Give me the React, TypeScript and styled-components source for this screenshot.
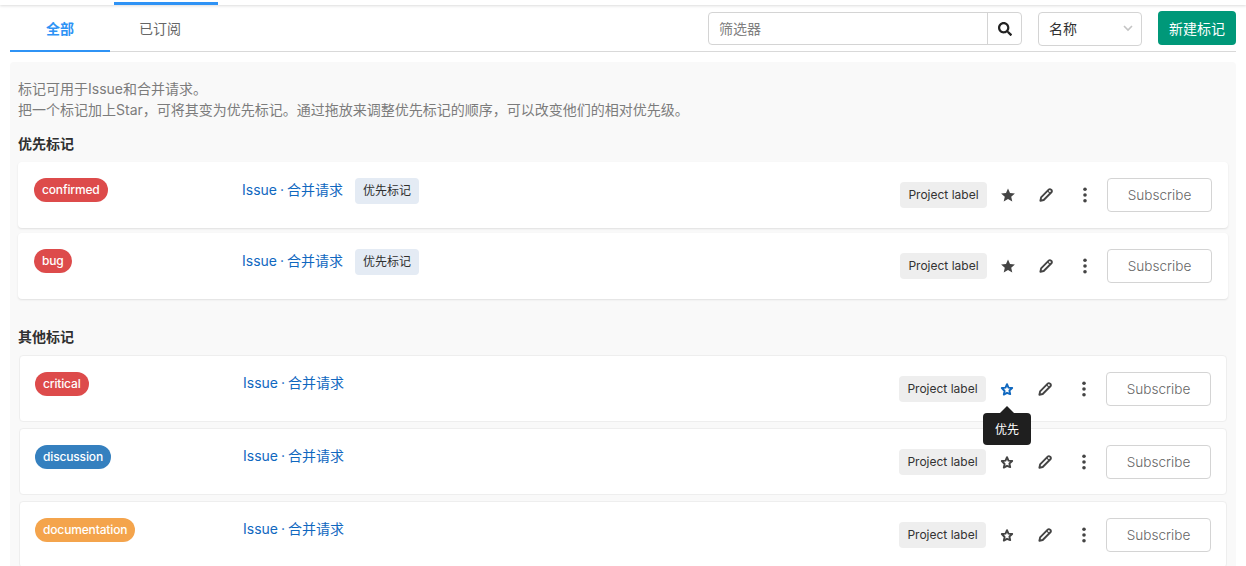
import React from 'react';
import styled, { createGlobalStyle } from 'styled-components';
import { FaSearch } from 'react-icons/fa';

const GlobalStyle = createGlobalStyle`
  html, body {
    margin: 0;
    padding: 0;
    height: 100%;
    overflow: hidden;
    background: #fff;
    font-family: Inter, "Noto Sans CJK SC", sans-serif;
    font-size: 14px;
    color: #303030;
  }
  * { box-sizing: border-box; }
`;

const TopStrip = styled.div`
  height: 5px;
  padding: 2px 0 0 114px;
  background: #fff;
  box-shadow: 0 1px 3px rgba(0, 0, 0, 0.14);
`;

const ActiveBar = styled.div`
  width: 104px;
  height: 3px;
  background: #2f93f5;
`;

const Toolbar = styled.div`
  display: flex;
  align-items: flex-start;
  justify-content: space-between;
  height: 47px;
  margin: 0 10px;
  border-bottom: 1px solid #d9d9d9;
`;

const Tabs = styled.div`
  display: flex;
`;

const Tab = styled.div<{ $active?: boolean }>`
  width: 100px;
  height: 47px;
  padding-top: 14px;
  line-height: 20px;
  text-align: center;
  color: ${(p) => (p.$active ? '#2f93f5' : '#666')};
  font-weight: ${(p) => (p.$active ? 600 : 400)};
  border-bottom: ${(p) => (p.$active ? '2px solid #2f93f5' : 'none')};
`;

const Controls = styled.div`
  display: flex;
  align-items: flex-start;
  padding-top: 6px;
`;

const Search = styled.div`
  display: flex;
  width: 314px;
  height: 33px;
  margin-top: 1px;
  margin-right: 16px;
  border: 1px solid #d4d4d4;
  border-radius: 4px;
`;

const SearchInput = styled.div`
  flex: 1;
  padding-left: 10px;
  line-height: 32px;
  color: #808080;
`;

const SearchButton = styled.div`
  display: flex;
  align-items: center;
  justify-content: center;
  width: 34px;
  border-left: 1px solid #d4d4d4;
  color: #222;
  font-size: 14px;
`;

const SortSelect = styled.div`
  display: flex;
  align-items: center;
  justify-content: space-between;
  width: 104px;
  height: 34px;
  margin-top: 1px;
  margin-right: 16px;
  padding: 0 7px 2px 10px;
  border: 1px solid #d4d4d4;
  border-radius: 4px;
  color: #303030;
`;

const NewButton = styled.button`
  width: 78px;
  height: 34px;
  padding: 0;
  border: none;
  border-radius: 4px;
  background: #009879;
  color: #fff;
  font: inherit;
`;

const Panel = styled.div`
  margin: 10px 10px 0;
  padding: 16px 8px;
  border-radius: 4px;
  background: #f9f9f9;
`;

const Intro = styled.p`
  margin: 0;
  font-size: 14px;
  line-height: 21px;
  color: #7c7c7c;
`;

const Heading = styled.h4<{ $spaced?: boolean }>`
  margin: ${(p) => (p.$spaced ? '28px 0 8px' : '14px 0 8px')};
  font-size: 14px;
  line-height: 20px;
  font-weight: 600;
  color: #303030;
`;

const RowList = styled.div<{ $gap: number }>`
  display: flex;
  flex-direction: column;
  gap: ${(p) => p.$gap}px;
`;

const Row = styled.div<{ $priority?: boolean }>`
  display: flex;
  align-items: flex-start;
  justify-content: space-between;
  height: ${(p) => (p.$priority ? 66 : 67)}px;
  margin: ${(p) => (p.$priority ? '0' : '0 1px')};
  padding: ${(p) => (p.$priority ? '16px' : '16px 15px')};
  border-radius: 4px;
  background: #fff;
  ${(p) =>
    p.$priority
      ? 'box-shadow: 0 1px 2px rgba(0, 0, 0, 0.1);'
      : 'border: 1px solid #eeeeee;'}
`;

const RowMain = styled.div`
  display: flex;
  align-items: flex-start;
`;

const LabelCell = styled.div`
  width: 208px;
`;

const LabelPill = styled.span<{ $color: string }>`
  display: inline-block;
  height: 24px;
  padding: 0 8px;
  border-radius: 12px;
  background: ${(p) => p.$color};
  color: #fff;
  font-size: 12px;
  font-weight: 500;
  letter-spacing: -0.15px;
  line-height: 23px;
`;

const Links = styled.div<{ $priority?: boolean }>`
  margin-top: ${(p) => (p.$priority ? 0 : -1)}px;
  line-height: 24px;
  font-size: 14px;
  word-spacing: -1px;
  color: #1068bf;
`;

const PriorityTag = styled.span`
  height: 26px;
  margin-left: 12px;
  padding: 0 8px;
  border-radius: 4px;
  background: #e4ebf4;
  color: #303030;
  font-size: 12px;
  line-height: 25px;
`;

const RowActions = styled.div`
  display: flex;
  align-items: center;
  height: 34px;
`;

const ScopeTag = styled.span`
  width: 87px;
  height: 26px;
  border-radius: 4px;
  background: #eeeeee;
  color: #333;
  font-size: 12px;
  line-height: 26px;
  text-align: center;
`;

const IconSlot = styled.span<{ $active?: boolean; $width: number }>`
  position: relative;
  display: flex;
  align-items: center;
  justify-content: center;
  width: ${(p) => p.$width}px;
  height: 16px;
  margin-top: -1px;
  color: ${(p) => (p.$active ? '#1068bf' : '#444')};
`;

const Tooltip = styled.span`
  position: absolute;
  top: 32px;
  left: 50%;
  width: 48px;
  height: 32px;
  margin-left: -24px;
  border-radius: 4px;
  background: #1f1f1f;
  color: #fff;
  font-size: 12px;
  line-height: 33px;
  text-align: center;

  &::before {
    content: '';
    position: absolute;
    top: -7px;
    left: 50%;
    margin-left: -7px;
    border-style: solid;
    border-width: 0 7px 7px;
    border-color: transparent transparent #1f1f1f;
  }
`;

const SubscribeButton = styled.button`
  width: 105px;
  height: 34px;
  padding: 0 0 1px;
  border: 1px solid #d4d4d4;
  border-radius: 4px;
  background: #fff;
  color: #666;
  font-family: inherit;
  font-size: 13.6px;
  font-weight: 300;
`;

const StarIcon = ({ filled }: { filled?: boolean }) => (
  <svg width="16" height="16" viewBox="0 0 16 16">
    {filled ? (
      <path
        d="M8 1.4l2 4.5 4.9.5-3.7 3.3 1.1 4.8L8 12.1l-4.3 2.4 1.1-4.8L1.1 6.4 6 5.9z"
        fill="currentColor"
      />
    ) : (
      <path
        d="M8 3.2l1.5 3.4 3.7.4-2.8 2.5.8 3.6L8 11.8l-3.2 1.8.8-3.6L2.8 7l3.7-.4z"
        fill="none"
        stroke="currentColor"
        strokeWidth="1.9"
        strokeLinejoin="round"
      />
    )}
  </svg>
);

const PencilIcon = () => (
  <svg width="16" height="16" viewBox="0 0 16 16" fill="none" stroke="currentColor" strokeWidth="1.9" strokeLinejoin="round">
    <path d="M10.7 2.6a1.6 1.6 0 0 1 2.3 0l.4.4a1.6 1.6 0 0 1 0 2.3l-7.7 7.7-3.3.7.7-3.3z" />
    <path d="M9.6 3.8l2.6 2.6" strokeWidth="1.2" />
  </svg>
);

const DotsIcon = () => (
  <svg width="16" height="16" viewBox="0 0 16 16" fill="currentColor">
    <circle cx="8" cy="2.2" r="1.8" />
    <circle cx="8" cy="8" r="1.8" />
    <circle cx="8" cy="13.8" r="1.8" />
  </svg>
);

const ChevronIcon = () => (
  <svg width="12" height="12" viewBox="0 0 12 12" fill="none" stroke="#c4c4c4" strokeWidth="1.6">
    <path d="M2 4l4 4 4-4" />
  </svg>
);

const priorityLabels = [
  { name: 'confirmed', color: '#dd4b4b' },
  { name: 'bug', color: '#dd4b4b' },
];

const otherLabels = [
  { name: 'critical', color: '#dd4b4b', hovered: true },
  { name: 'discussion', color: '#3580bf' },
  { name: 'documentation', color: '#f4a44c' },
];

type LabelRowProps = {
  name: string;
  color: string;
  priority?: boolean;
  hovered?: boolean;
};

const LabelRow = ({ name, color, priority, hovered }: LabelRowProps) => (
  <Row $priority={priority}>
    <RowMain>
      <LabelCell>
        <LabelPill $color={color}>{name}</LabelPill>
      </LabelCell>
      <Links $priority={priority}>Issue · 合并请求</Links>
      {priority && <PriorityTag>优先标记</PriorityTag>}
    </RowMain>
    <RowActions>
      <ScopeTag>Project label</ScopeTag>
      <IconSlot $width={42} $active={hovered}>
        <StarIcon filled={priority} />
        {hovered && <Tooltip>优先</Tooltip>}
      </IconSlot>
      <IconSlot $width={34}>
        <PencilIcon />
      </IconSlot>
      <IconSlot $width={44}>
        <DotsIcon />
      </IconSlot>
      <SubscribeButton>Subscribe</SubscribeButton>
    </RowActions>
  </Row>
);

const App = () => (
  <>
    <GlobalStyle />
    <TopStrip>
      <ActiveBar />
    </TopStrip>
    <Toolbar>
      <Tabs>
        <Tab $active>全部</Tab>
        <Tab>已订阅</Tab>
      </Tabs>
      <Controls>
        <Search>
          <SearchInput>筛选器</SearchInput>
          <SearchButton>
            <FaSearch />
          </SearchButton>
        </Search>
        <SortSelect>
          名称
          <ChevronIcon />
        </SortSelect>
        <NewButton>新建标记</NewButton>
      </Controls>
    </Toolbar>
    <Panel>
      <Intro>标记可用于Issue和合并请求。</Intro>
      <Intro>把一个标记加上Star，可将其变为优先标记。通过拖放来调整优先标记的顺序，可以改变他们的相对优先级。</Intro>
      <Heading>优先标记</Heading>
      <RowList $gap={5}>
        {priorityLabels.map((l) => (
          <LabelRow key={l.name} {...l} priority />
        ))}
      </RowList>
      <Heading $spaced>其他标记</Heading>
      <RowList $gap={6}>
        {otherLabels.map((l) => (
          <LabelRow key={l.name} {...l} />
        ))}
      </RowList>
    </Panel>
  </>
);

export default App;
